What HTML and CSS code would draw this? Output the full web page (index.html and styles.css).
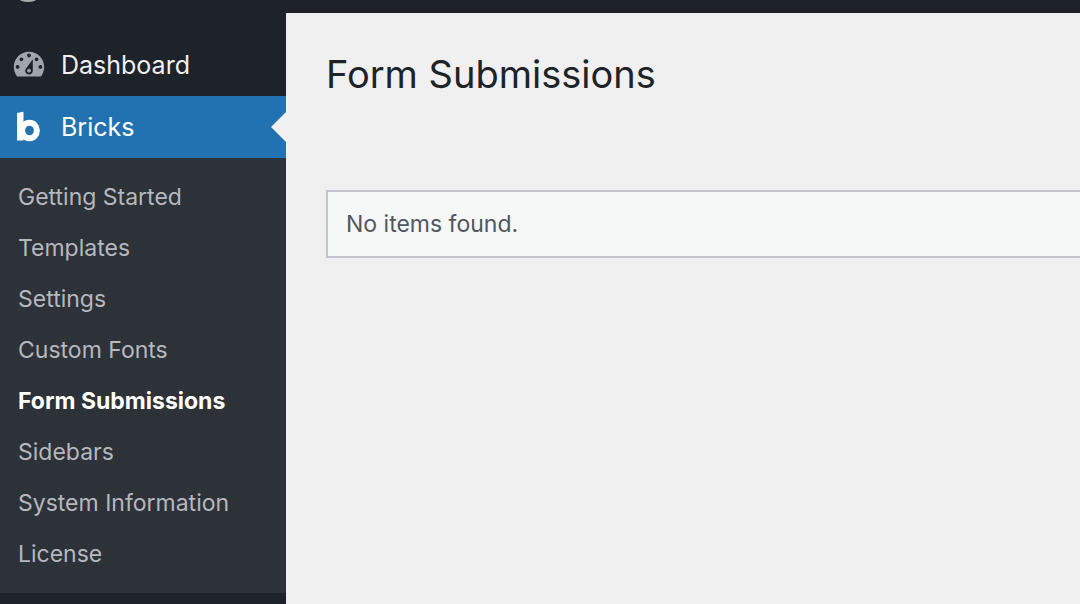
FILE: index.html
```html
<!doctype html>
<html lang="en">
    <head>
        <meta charset="UTF-8" />
        <title>Form Submissions</title>
        <link rel="stylesheet" href="styles.css">
    </head>

    <body>
        <header class="adminbar">
            <svg class="adminbar-logo" viewBox="0 0 36 36" aria-hidden="true">
                <circle cx="18" cy="18" r="18" />
            </svg>
        </header>

        <div class="wrapper">
            <nav class="sidebar">
                <a class="menu-link" href="#">
                    <svg class="menu-icon" viewBox="0 0 20 20" aria-hidden="true">
                        <path fill-rule="evenodd" d="M3.76 16h12.48c1.1-1.37 1.76-3.11 1.76-5 0-4.42-3.58-8-8-8s-8 3.58-8 8c0 1.89.66 3.63 1.76 5zM10 4c.55 0 1 .45 1 1s-.45 1-1 1-1-.45-1-1 .45-1 1-1zM6 6c.55 0 1 .45 1 1s-.45 1-1 1-1-.45-1-1 .45-1 1-1zm8 0c.55 0 1 .45 1 1s-.45 1-1 1-1-.45-1-1 .45-1 1-1zm-5.37 5.55L12 7v6c0 1.1-.9 2-2 2s-2-.9-2-2c0-.57.24-1.08.63-1.45zM4 10c.55 0 1 .45 1 1s-.45 1-1 1-1-.45-1-1 .45-1 1-1zm12 0c.55 0 1 .45 1 1s-.45 1-1 1-1-.45-1-1 .45-1 1-1zm-5 3c0-.55-.45-1-1-1s-1 .45-1 1 .45 1 1 1 1-.45 1-1z" />
                    </svg>
                    Dashboard
                </a>
                <a class="menu-link current" href="#">
                    <svg class="menu-icon" viewBox="0 0 38 38" aria-hidden="true">
                        <path d="M7 5l6.5-1.2V32.5H7z" />
                        <ellipse cx="19.5" cy="22.5" rx="7.4" ry="7.8" fill="none" stroke="currentColor" stroke-width="6" />
                    </svg>
                    Bricks
                </a>
                <ul class="submenu">
                    <li><a href="#">Getting Started</a></li>
                    <li><a href="#">Templates</a></li>
                    <li><a href="#">Settings</a></li>
                    <li><a href="#">Custom Fonts</a></li>
                    <li><a class="active" href="#">Form Submissions</a></li>
                    <li><a href="#">Sidebars</a></li>
                    <li><a href="#">System Information</a></li>
                    <li><a href="#">License</a></li>
                </ul>
            </nav>

            <main class="content">
                <h1>Form Submissions</h1>
                <table class="list-table">
                    <tbody>
                        <tr>
                            <td>No items found.</td>
                        </tr>
                    </tbody>
                </table>
            </main>
        </div>
    </body>
</html>
```

FILE: styles.css
```css
* {
    box-sizing: border-box;
}
body {
    margin: 0;
    min-height: 100vh;
    display: flex;
    flex-direction: column;
    font-family: Inter, "Liberation Sans", sans-serif;
    font-size: 23px;
    background-color: #f0f0f1;
    color: #1d2327;
    overflow-x: hidden;
}
a {
    text-decoration: none;
}
.adminbar {
    display: flex;
    align-items: flex-end;
    height: 13px;
    padding: 0 10px 11px;
    background-color: #1e2229;
    overflow: hidden;
}
.adminbar-logo {
    width: 36px;
    height: 36px;
    flex-shrink: 0;
    fill: #a7aaad;
}
.wrapper {
    display: flex;
    flex: 1;
}
.sidebar {
    width: 286px;
    flex-shrink: 0;
    padding-top: 21px;
    background-color: #1e2229;
}
.menu-link {
    position: relative;
    display: flex;
    align-items: center;
    gap: 13px;
    height: 62px;
    padding-left: 10px;
    font-size: 25px;
    color: #f0f0f1;
}
.menu-icon {
    width: 38px;
    height: 38px;
    fill: #a0a4ab;
}
.current {
    background-color: #2271b1;
    color: #fff;
}
.current .menu-icon {
    fill: #fff;
}
.current::after {
    content: "";
    position: absolute;
    right: 0;
    top: 16px;
    border: 15px solid transparent;
    border-left: 0;
    border-right-color: #f0f0f1;
}
.submenu {
    margin: 0;
    padding: 14px 0 13px;
    list-style: none;
    background-color: #2d3138;
}
.submenu a {
    display: block;
    padding-left: 18px;
    line-height: 51px;
    color: #b5b8bf;
}
.submenu .active {
    color: #fff;
    font-weight: 700;
}
.content {
    flex: 1;
    padding: 35px 0 0 40px;
}
h1 {
    margin: 0 0 90px;
    font-size: 38px;
    font-weight: 400;
    line-height: 52px;
}
.list-table {
    width: 100%;
    border: 2px solid #c3c4c7;
    border-right: 0;
    border-spacing: 0;
    background-color: #f6f7f7;
}
.list-table td {
    padding: 16px 18px;
    line-height: 32px;
    color: #50575e;
}
```
